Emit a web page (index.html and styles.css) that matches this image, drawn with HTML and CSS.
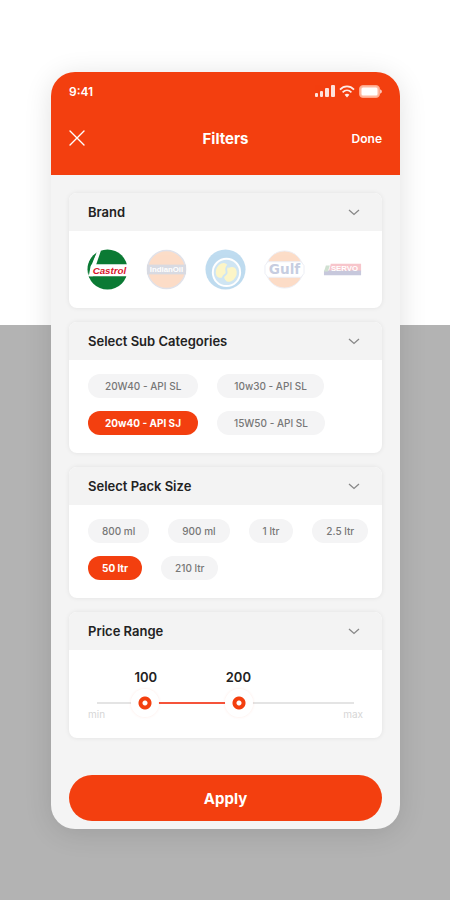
FILE: index.html
```html
<!DOCTYPE html>
<html lang="en">
<head>
  <meta charset="UTF-8">
  <meta name="viewport" content="width=device-width, initial-scale=1.0">
  <title>Filters</title>
  <link rel="stylesheet" href="styles.css">
</head>
<body>
  <main class="phone">
    <header class="header">
      <!-- Status bar -->
      <div class="status">
        <span>9:41</span>
        <div class="status-icons">
          <svg width="20" height="13" viewBox="0 0 20 13" fill="#fff" opacity=".85">
            <rect x="0" y="8" width="3" height="4" rx="1"/>
            <rect x="5" y="6" width="3" height="6" rx="1"/>
            <rect x="10" y="3" width="4" height="9" rx="1"/>
            <rect x="16" y="0" width="4" height="12" rx="1"/>
          </svg>
          <svg width="16" height="13" viewBox="0 0 16 13" fill="none" stroke="#fff" stroke-width="1.7" opacity=".9">
            <path d="M1 4.6C5 .4 11 .4 15 4.6M3.6 7.4c2.6-2.6 6.2-2.6 8.8 0"/>
            <path d="M8 12.4 5.6 9.8c1.4-1.3 3.4-1.3 4.8 0z" fill="#fff" stroke="none"/>
          </svg>
          <svg width="23" height="13" viewBox="0 0 23 13">
            <rect x=".5" y=".5" width="20" height="12" rx="3.5" fill="#ffb9a0" stroke="#ffa488"/>
            <rect x="2.5" y="2.5" width="16" height="8" rx="1.5" fill="#fff"/>
            <path d="M21.3 4.3c1.8.8 1.8 3.6 0 4.4z" fill="#fff"/>
          </svg>
        </div>
      </div>
      <!-- Title bar -->
      <div class="title-bar">
        <button class="close" type="button" aria-label="Close">
          <svg width="16" height="16" viewBox="0 0 16 16" stroke="#fff" stroke-width="1.4" stroke-linecap="round"><path d="M1 1l14 14M15 1L1 15"/></svg>
        </button>
        <h1>Filters</h1>
        <button class="done" type="button">Done</button>
      </div>
    </header>

    <form class="filters">
      <section class="card">
        <button class="card-head" type="button" aria-expanded="true">
          Brand
          <svg class="chevron" viewBox="0 0 12 7"><path d="M1 1l5 4.5L11 1"/></svg>
        </button>
        <div class="card-body brands">
          <label class="brand">
            <input type="radio" name="brand" aria-label="Castrol" checked>
            <svg viewBox="0 0 42 42">
              <circle cx="21" cy="21" r="20.5" fill="#0b7a34"/>
              <path d="M5 15.500H42V28H1L3 18z" fill="#fff"/>
              <path d="M2.500 28 5 15.500 10 3l4.500-2L9.500 15.500 6 28z" fill="#fff"/>
              <path d="M9.500 4.500 4 15.500 2 27C-.5 18 2 9.500 9.500 4.500z" fill="#0b7a34"/>
              <text x="23" y="26" class="logo-castrol">Castrol</text>
            </svg>
          </label>
          <label class="brand">
            <input type="radio" name="brand" aria-label="IndianOil">
            <svg viewBox="0 0 42 42">
              <circle cx="21" cy="21" r="19.500" fill="#f47b2c" stroke="#8a90ad" stroke-width="1.500"/>
              <rect x="1" y="16" width="40" height="10" fill="#6b7391"/>
              <text x="21" y="24" class="logo-indian">IndianOil</text>
            </svg>
          </label>
          <label class="brand">
            <input type="radio" name="brand" aria-label="Bharat Petroleum">
            <svg viewBox="0 0 42 42">
              <circle cx="21" cy="21" r="20.500" fill="#0a78c4"/>
              <circle cx="22" cy="24" r="14" fill="#4b9fd4" stroke="#fff" stroke-width="2"/>
              <ellipse cx="17.500" cy="22" rx="6" ry="8" transform="rotate(30 17.500 22)" fill="#f5dc2c"/>
              <ellipse cx="26" cy="26" rx="6" ry="8" transform="rotate(30 26 26)" fill="#f5dc2c"/>
              <path d="M25 16c-6 3-2 7-3 9s-5 2-4 8" fill="none" stroke="#4b9fd4" stroke-width="2"/>
            </svg>
          </label>
          <label class="brand">
            <input type="radio" name="brand" aria-label="Gulf">
            <svg viewBox="0 0 42 42">
              <circle cx="21" cy="21" r="19" fill="#f47b2c" stroke="#b9c0da" stroke-width="1"/>
              <path d="M4 13h34l3 4v8l-3 4H4l-3-4v-8z" fill="#fff" stroke="#b9c0da" stroke-width="1"/>
              <text x="21" y="26" class="logo-gulf">Gulf</text>
            </svg>
          </label>
          <label class="brand">
            <input type="radio" name="brand" aria-label="Servo">
            <svg viewBox="0 0 42 42">
              <path d="M8 15h31v8H6z" fill="#e2223a"/>
              <path d="M1 22h38v5H1z" fill="#2b2f7a"/>
              <path d="M3 17h4l-2 6H1z" fill="#4e8a52"/>
              <text x="22" y="23" class="logo-servo">SERVO</text>
            </svg>
          </label>
        </div>
      </section>

      <section class="card">
        <button class="card-head" type="button" aria-expanded="true">
          Select Sub Categories
          <svg class="chevron" viewBox="0 0 12 7"><path d="M1 1l5 4.5L11 1"/></svg>
        </button>
        <div class="card-body pills pills-wide">
          <label class="pill"><input type="checkbox" name="sub">20W40 - API SL</label>
          <label class="pill"><input type="checkbox" name="sub">10w30 - API SL</label>
          <label class="pill"><input type="checkbox" name="sub" checked>20w40 - API SJ</label>
          <label class="pill"><input type="checkbox" name="sub">15W50 - API SL</label>
        </div>
      </section>

      <section class="card">
        <button class="card-head" type="button" aria-expanded="true">
          Select Pack Size
          <svg class="chevron" viewBox="0 0 12 7"><path d="M1 1l5 4.5L11 1"/></svg>
        </button>
        <div class="card-body pills">
          <label class="pill"><input type="checkbox" name="pack">800 ml</label>
          <label class="pill"><input type="checkbox" name="pack">900 ml</label>
          <label class="pill"><input type="checkbox" name="pack">1 ltr</label>
          <label class="pill"><input type="checkbox" name="pack">2.5 ltr</label>
          <label class="pill"><input type="checkbox" name="pack" checked>50 ltr</label>
          <label class="pill"><input type="checkbox" name="pack">210 ltr</label>
        </div>
      </section>

      <section class="card">
        <button class="card-head" type="button" aria-expanded="true">
          Price Range
          <svg class="chevron" viewBox="0 0 12 7"><path d="M1 1l5 4.5L11 1"/></svg>
        </button>
        <div class="card-body price" style="--from: 19%; --to: 55%">
          <div class="values">
            <output class="value value-from">100</output>
            <output class="value value-to">200</output>
          </div>
          <div class="slider">
            <div class="track"></div>
            <input type="range" min="48" max="324" value="100" aria-label="Minimum price">
            <input type="range" min="48" max="324" value="200" aria-label="Maximum price">
          </div>
          <div class="limits"><span>min</span><span>max</span></div>
        </div>
      </section>

      <button class="apply" type="submit">Apply</button>
    </form>
  </main>
</body>
</html>
```
FILE: styles.css
```css
* {
  box-sizing: border-box;
}

body {
  margin: 0;
  min-height: 100vh;
  padding: 72px 50px 70px 51px;
  font-family: Inter, 'Liberation Sans', sans-serif;
  color: #222;
  background: linear-gradient(#fff 325px, #b3b3b3 325px);
}

button {
  border: none;
  padding: 0;
  background: none;
  font-family: inherit;
  color: inherit;
  cursor: pointer;
}

/* Phone */
.phone {
  max-width: 420px;
  margin: 0 auto;
  background: #f4f4f4;
  border-radius: 24px;
  overflow: hidden;
  box-shadow: 0 4px 28px rgba(0, 0, 0, 0.12);
}

.header {
  padding: 11px 18px 25px;
  background: #f33f0f;
  color: #fff;
}

.status {
  display: flex;
  justify-content: space-between;
  align-items: center;
  height: 16px;
  font-size: 12px;
  font-weight: 600;
}

.status-icons {
  display: flex;
  gap: 4px;
}

.title-bar {
  display: grid;
  grid-template-columns: 1fr auto 1fr;
  align-items: center;
  margin-top: 27px;
  height: 24px;
}

.title-bar h1 {
  margin: 0;
  font-size: 15px;
  font-weight: 700;
}

.close {
  justify-self: start;
  display: flex;
}

.done {
  justify-self: end;
  font-size: 12px;
  font-weight: 600;
}

/* Cards */
.filters {
  display: flex;
  flex-direction: column;
  gap: 14px;
  padding: 18px 18px 8px;
}

.card {
  background: #fff;
  border-radius: 8px;
  overflow: hidden;
  box-shadow: 0 0 5px rgba(0, 0, 0, 0.08);
}

.card-head {
  display: flex;
  justify-content: space-between;
  align-items: center;
  width: 100%;
  height: 38px;
  padding: 0 22px 0 19px;
  background: #f3f3f3;
  font-size: 13px;
  font-weight: 600;
}

.chevron {
  width: 12px;
  height: 7px;
  fill: none;
  stroke: #888;
  stroke-width: 1.3;
}

.card-body {
  padding: 18px;
}

/* Brands */
.brands {
  display: grid;
  grid-template-columns: repeat(5, 1fr);
  gap: 18px;
}

.brand {
  position: relative;
  opacity: 0.26;
}

.brand:has(input:checked) {
  opacity: 1;
}

.brand svg {
  display: block;
  width: 100%;
}

.brand input,
.pill input {
  position: absolute;
  inset: 0;
  margin: 0;
  appearance: none;
  cursor: pointer;
}

.brand text {
  text-anchor: middle;
  font-family: 'Liberation Sans', sans-serif;
  font-weight: 700;
  fill: #fff;
}

.brand .logo-castrol {
  font-size: 10px;
  font-style: italic;
  fill: #d8152b;
}

.brand .logo-indian {
  font-size: 8px;
}

.brand .logo-gulf {
  font-family: 'DejaVu Sans', sans-serif;
  font-size: 14px;
  fill: #27408b;
}

.brand .logo-servo {
  font-size: 8px;
}

/* Pills */
.pills {
  display: flex;
  flex-wrap: wrap;
  gap: 13px 19px;
  padding: 14px 12px 18px 19px;
}

.pill {
  position: relative;
  padding: 0 14px;
  border-radius: 12px;
  background: #f4f4f5;
  color: #777;
  font-size: 10px;
  font-weight: 500;
  line-height: 24px;
}

.pills-wide .pill {
  padding: 0 17px;
}

.pill:has(input:checked) {
  background: #f33f0f;
  color: #fff;
  font-weight: 700;
}

/* Price range */
.price {
  padding: 18px 28px 18px;
}

.values {
  position: relative;
  height: 18px;
}

.value {
  position: absolute;
  transform: translateX(-50%);
  font-size: 13px;
  font-weight: 600;
  line-height: 18px;
}

.value-from {
  left: var(--from);
}

.value-to {
  left: var(--to);
}

.slider {
  position: relative;
  display: flex;
  align-items: center;
  height: 34px;
}

.track {
  width: 100%;
  height: 2px;
  background: linear-gradient(90deg, #e4e4e4 var(--from), #f5533a var(--from) var(--to), #e4e4e4 var(--to));
}

.slider input {
  position: absolute;
  left: -14px;
  width: calc(100% + 28px);
  height: 28px;
  margin: 0;
  appearance: none;
  background: none;
  pointer-events: none;
}

.slider input::-webkit-slider-thumb {
  appearance: none;
  width: 28px;
  height: 28px;
  border-radius: 50%;
  background: radial-gradient(circle, #fff 2px, #f33f0f 3px 6px, #fff 7px);
  box-shadow: 0 0 3px rgba(243, 63, 15, 0.12);
  pointer-events: auto;
}

.limits {
  display: flex;
  justify-content: space-between;
  margin: -12px -9px 0;
  font-size: 10px;
  line-height: 12px;
  color: #d6d6d6;
}

.apply {
  height: 46px;
  margin-top: 23px;
  border-radius: 23px;
  background: #f33f0f;
  color: #fff;
  font-size: 15px;
  font-weight: 700;
}
```
